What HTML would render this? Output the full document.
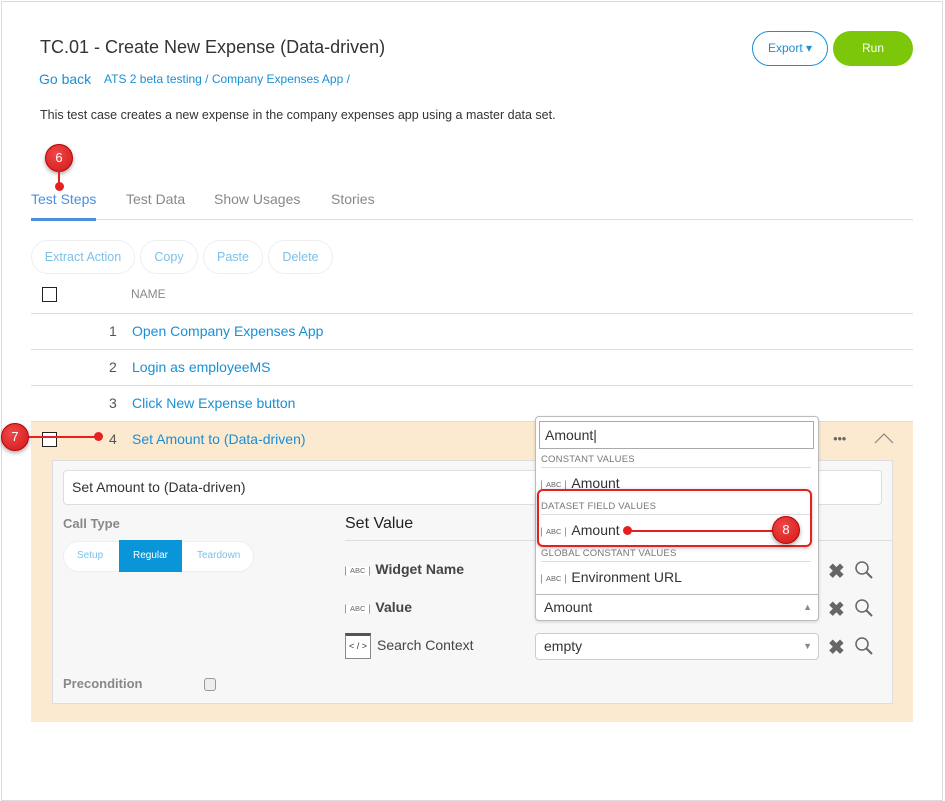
<!DOCTYPE html>
<html><head><meta charset="utf-8"><style>
*{box-sizing:border-box;margin:0;padding:0}
body{width:945px;height:724px;overflow:hidden;background:#fff;font-family:"Liberation Sans",Arial,sans-serif;position:relative;color:#333}
.a{position:absolute;white-space:nowrap}
.card{position:absolute;left:1px;top:1px;width:942px;height:800px;border:1px solid #dcdcdc;background:#fff}
.link{color:#1a8fd5}
.pill{position:absolute;top:240px;height:34px;border:1px solid #eee;border-radius:17px;color:#7cc0e8;font-size:12.5px;line-height:32px;text-align:center}
.hl{position:absolute;left:31px;width:882px;height:1px;background:#ddd}
.cb{position:absolute;width:15px;height:15px;border:1px solid #222;background:#fff}
.badge{position:absolute;width:28px;height:28px;border-radius:50%;background:radial-gradient(circle at 40% 35%,#f04848,#d01818);border:1px solid #b00;box-shadow:0 2px 4px rgba(0,0,0,.35);color:#fff;font-size:13px;text-align:center;line-height:26px}
.rline{position:absolute;height:2px;background:#e62020}
.dot{position:absolute;width:9px;height:9px;border-radius:50%;background:#e62020}
.abc{display:inline-block;border:1px solid #999;font-size:7.5px;color:#666;padding:0 4px;line-height:8px;height:10px;margin-right:5px;vertical-align:1px;font-weight:normal;background:linear-gradient(#fff,#fff) padding-box;border-top-color:transparent;border-bottom-color:transparent;box-shadow:inset 0 1px 0 #fff}
.sec{position:absolute;left:541px;font-size:9.5px;color:#777;letter-spacing:.2px}
.secl{position:absolute;left:541px;width:270px;height:1px;background:#ddd}
.opt{position:absolute;left:541px;font-size:14px;color:#333}
.x{position:absolute;font-size:20px;color:#666;font-weight:bold}
</style></head><body>
<div class="card"></div>
<div class="a" style="left:40px;top:37px;font-size:18px;color:#333">TC.01 - Create New Expense (Data-driven)</div>
<div class="a link" style="left:39px;top:71px;font-size:14px">Go back</div>
<div class="a link" style="left:104px;top:72px;font-size:12px">ATS 2 beta testing / Company Expenses App /</div>
<div class="a" style="left:40px;top:108px;font-size:12.5px;color:#333">This test case creates a new expense in the company expenses app using a master data set.</div>
<div class="a" style="left:752px;top:31px;width:76px;height:35px;border:1px solid #1a8fd5;border-radius:18px;color:#1a8fd5;font-size:12px;line-height:33px;text-align:center">Export ▾</div>
<div class="a" style="left:833px;top:31px;width:80px;height:35px;background:#7cc70a;border-radius:18px;color:#fff;font-size:12px;line-height:35px;text-align:center">Run</div>

<div class="a" style="left:31px;top:191px;font-size:14px;color:#4a8fe0">Test Steps</div>
<div class="a" style="left:126px;top:191px;font-size:14px;color:#888">Test Data</div>
<div class="a" style="left:214px;top:191px;font-size:14px;color:#888">Show Usages</div>
<div class="a" style="left:331px;top:191px;font-size:14px;color:#888">Stories</div>
<div class="hl" style="top:219px"></div>
<div class="a" style="left:31px;top:218px;width:65px;height:3px;background:#4a8fe0"></div>
<div class="badge" style="left:45px;top:144px">6</div>
<div class="rline" style="left:58px;top:171px;width:2px;height:14px"></div>
<div class="dot" style="left:55px;top:182px"></div>

<div class="pill" style="left:31px;width:104px">Extract Action</div>
<div class="pill" style="left:140px;width:58px">Copy</div>
<div class="pill" style="left:203px;width:60px">Paste</div>
<div class="pill" style="left:268px;width:65px">Delete</div>

<div class="cb" style="left:42px;top:287px"></div>
<div class="a" style="left:131px;top:287px;font-size:12px;color:#888">NAME</div>
<div class="hl" style="top:313px"></div>
<div class="a" style="left:109px;top:323px;font-size:14px;color:#555">1</div>
<div class="a link" style="left:132px;top:323px;font-size:14px">Open Company Expenses App</div>
<div class="hl" style="top:349px"></div>
<div class="a" style="left:109px;top:359px;font-size:14px;color:#555">2</div>
<div class="a link" style="left:132px;top:359px;font-size:14px">Login as employeeMS</div>
<div class="hl" style="top:385px"></div>
<div class="a" style="left:109px;top:395px;font-size:14px;color:#555">3</div>
<div class="a link" style="left:132px;top:395px;font-size:14px">Click New Expense button</div>
<div class="hl" style="top:421px"></div>

<div class="a" style="left:31px;top:422px;width:882px;height:300px;background:#fbe9d0"></div>
<div class="cb" style="left:42px;top:432px"></div>
<div class="a" style="left:109px;top:431px;font-size:14px;color:#555">4</div>
<div class="a link" style="left:132px;top:431px;font-size:14px">Set Amount to (Data-driven)</div>
<div class="a" style="left:833px;top:434px;font-size:8px;color:#666;letter-spacing:-0.5px">●●●</div>
<svg class="a" style="left:874px;top:432px" width="20" height="12"><path d="M1 11 L10 2 L19 11" fill="none" stroke="#888" stroke-width="1.2"/></svg>
<div class="badge" style="left:1px;top:423px">7</div>
<div class="rline" style="left:29px;top:436px;width:66px"></div>
<div class="dot" style="left:94px;top:432px"></div>

<div class="a" style="left:52px;top:460px;width:841px;height:244px;background:#f7f7f7;border:1px solid #ddd"></div>
<div class="a" style="left:63px;top:470px;width:819px;height:35px;background:#fff;border:1px solid #ddd;border-radius:4px;font-size:14px;line-height:33px;padding-left:8px">Set Amount to (Data-driven)</div>
<div class="a" style="left:63px;top:516px;font-size:13px;font-weight:bold;color:#888">Call Type</div>
<div class="a" style="left:63px;top:541px;width:191px;height:31px;background:#fff;border-radius:16px;border:1px solid #eee"></div>
<div class="a" style="left:77px;top:550px;font-size:10px;color:#7cc0e8">Setup</div>
<div class="a" style="left:119px;top:540px;width:63px;height:32px;background:#0a95d9;color:#fff;font-size:10px;line-height:32px;text-align:center">Regular</div>
<div class="a" style="left:197px;top:550px;font-size:10px;color:#7cc0e8">Teardown</div>
<div class="a" style="left:63px;top:676px;font-size:13px;font-weight:bold;color:#888">Precondition</div>
<div class="a" style="left:204px;top:678px;width:12px;height:13px;border:1px solid #999;border-radius:3px;background:#eee"></div>

<div class="a" style="left:345px;top:515px;font-size:16px;color:#222">Set Value</div>
<div class="a" style="left:345px;top:540px;width:548px;height:1px;background:#ddd"></div>
<div class="a" style="left:345px;top:561px;font-size:14px;font-weight:bold;color:#444"><span class="abc">ABC</span>Widget Name</div>
<div class="a" style="left:345px;top:599px;font-size:14px;font-weight:bold;color:#444"><span class="abc">ABC</span>Value</div>
<div class="a" style="left:345px;top:633px;width:26px;height:26px;border:1px solid #888;border-top:3px solid #555;background:#fff;font-size:9px;text-align:center;line-height:20px">&lt; / &gt;</div>
<div class="a" style="left:377px;top:637px;font-size:14px;color:#444">Search Context</div>

<div class="a" style="left:535px;top:633px;width:284px;height:27px;background:#fff;border:1px solid #ccc;border-radius:4px;font-size:14px;line-height:25px;padding-left:8px">empty<span style="position:absolute;right:6px;font-size:9px;color:#888">▼</span></div>

<div class="x" style="left:828px;top:559px">✖</div>
<div class="x" style="left:828px;top:597px">✖</div>
<div class="x" style="left:828px;top:635px">✖</div>
<svg class="a" style="left:854px;top:560px" width="20" height="20"><circle cx="8" cy="8" r="6" fill="none" stroke="#666" stroke-width="1.5"/><path d="M12.5 12.5 L18 18" stroke="#666" stroke-width="2"/></svg>
<svg class="a" style="left:854px;top:598px" width="20" height="20"><circle cx="8" cy="8" r="6" fill="none" stroke="#666" stroke-width="1.5"/><path d="M12.5 12.5 L18 18" stroke="#666" stroke-width="2"/></svg>
<svg class="a" style="left:854px;top:636px" width="20" height="20"><circle cx="8" cy="8" r="6" fill="none" stroke="#666" stroke-width="1.5"/><path d="M12.5 12.5 L18 18" stroke="#666" stroke-width="2"/></svg>

<div class="a" style="left:535px;top:416px;width:284px;height:205px;background:#fff;border:1px solid #bbb;border-radius:4px;box-shadow:0 1px 3px rgba(0,0,0,.15)"></div>
<div class="a" style="left:539px;top:421px;width:275px;height:28px;border:1px solid #aaa;font-size:14px;line-height:26px;padding-left:5px">Amount|</div>
<div class="sec" style="top:454px">CONSTANT VALUES</div>
<div class="secl" style="top:467px"></div>
<div class="opt" style="top:475px"><span class="abc">ABC</span>Amount</div>
<div class="sec" style="top:501px">DATASET FIELD VALUES</div>
<div class="secl" style="top:514px"></div>
<div class="opt" style="top:522px"><span class="abc">ABC</span>Amount</div>
<div class="sec" style="top:548px">GLOBAL CONSTANT VALUES</div>
<div class="secl" style="top:561px"></div>
<div class="opt" style="top:569px"><span class="abc">ABC</span>Environment URL</div>
<div class="a" style="left:535px;top:594px;width:284px;height:27px;border:1px solid #bbb;border-radius:0 0 4px 4px;background:#fff;font-size:14px;line-height:25px;padding-left:8px">Amount<span style="position:absolute;right:6px;font-size:9px;color:#888">▲</span></div>

<div class="a" style="left:537px;top:489px;width:275px;height:58px;border:2px solid #e62020;border-radius:6px;box-shadow:0 1px 4px rgba(0,0,0,.25)"></div>
<div class="dot" style="left:623px;top:526px"></div>
<div class="rline" style="left:628px;top:530px;width:146px"></div>
<div class="badge" style="left:772px;top:516px">8</div>
</body></html>
